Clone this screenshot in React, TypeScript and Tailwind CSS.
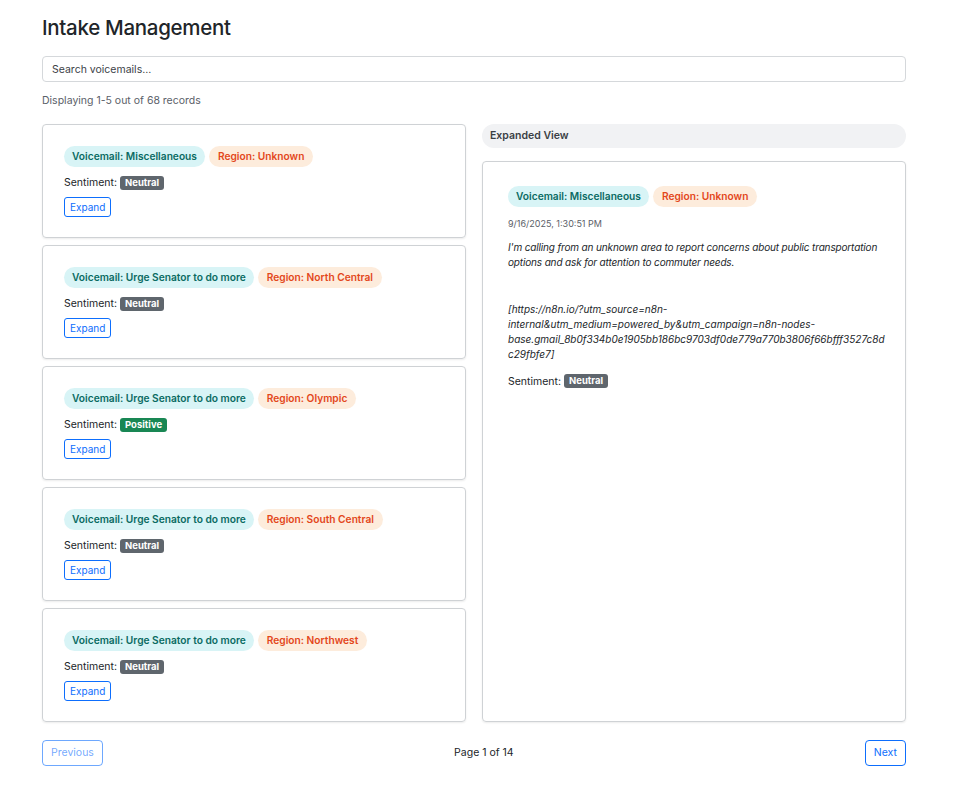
import React from 'react'

type Record = {
    category: string;
    region: string;
    sentiment: 'Neutral' | 'Positive';
}

const records: Record[] = [
    { category: 'Miscellaneous', region: 'Unknown', sentiment: 'Neutral' },
    { category: 'Urge Senator to do more', region: 'North Central', sentiment: 'Neutral' },
    { category: 'Urge Senator to do more', region: 'Olympic', sentiment: 'Positive' },
    { category: 'Urge Senator to do more', region: 'South Central', sentiment: 'Neutral' },
    { category: 'Urge Senator to do more', region: 'Northwest', sentiment: 'Neutral' },
];

const Badges = ({ category, region }: { category: string; region: string }) => (
    <div className="flex items-center gap-[4px]">
        <span className="h-[21px] px-[8px] flex items-center rounded-full bg-[#d8f4f6] text-[#0b6b63] text-[10.2px] font-semibold">
            Voicemail: {category}
        </span>
        <span className="h-[21px] px-[9px] flex items-center rounded-full bg-[#fdecdc] text-[#e3471b] text-[10.2px] font-semibold">
            Region: {region}
        </span>
    </div>
)

const Sentiment = ({ value }: { value: string }) => (
    <div className="flex items-center gap-[3px] text-[10.5px] text-[#212529]">
        <span>Sentiment:</span>
        <span className={`h-[14px] px-[5px] flex items-center rounded-[3px] text-[9.5px] font-bold text-white ${value === 'Positive' ? 'bg-[#198754]' : 'bg-[#5f666d]'}`}>
            {value}
        </span>
    </div>
)

export default function App() {
    return (
        <div className="w-[962px] min-h-[789px] bg-white pl-[42px] pt-[15px] font-['Inter',sans-serif] text-[#212529]">
            <div className="w-[864px]">
                <h1 className="text-[20.5px] font-medium leading-[26px] tracking-[-0.3px]">Intake Management</h1>

                <input
                    type="text"
                    placeholder="Search voicemails..."
                    className="mt-[15px] w-full h-[26px] px-[9px] rounded-[4px] border border-[#d5d8db] text-[10.5px] placeholder:text-[#3c4147] outline-none"
                />

                <p className="mt-[12px] text-[10.5px] text-[#5a6068] leading-[14px]">Displaying 1-5 out of 68 records</p>

                <div className="mt-[16px] grid grid-cols-2 gap-[16px]">
                    <div className="flex flex-col gap-[7px]">
                        {records.map((r, i) => (
                            <div key={i} className="h-[114px] rounded-[4px] border border-[#cfd2d5] shadow-[0_1px_2px_rgba(0,0,0,0.08)] px-[21px] pt-[21px] flex flex-col">
                                <Badges category={r.category} region={r.region} />
                                <div className="mt-[8px]">
                                    <Sentiment value={r.sentiment} />
                                </div>
                                <button className="mt-[6px] self-start h-[20px] px-[5px] rounded-[3px] border border-[#0d6efd] text-[#0d6efd] text-[10px] leading-none">
                                    Expand
                                </button>
                            </div>
                        ))}
                    </div>

                    <div className="flex flex-col">
                        <div className="h-[24px] rounded-full bg-[#f1f2f4] px-[8px] flex items-center text-[10.5px] font-semibold text-[#3a3f45]">
                            Expanded View
                        </div>
                        <div className="mt-[13px] flex-1 rounded-[4px] border border-[#cfd2d5] shadow-[0_1px_2px_rgba(0,0,0,0.08)] pl-[25px] pr-[20px] pt-[24px]">
                            <Badges category="Miscellaneous" region="Unknown" />
                            <div className="mt-[10px] text-[9px] text-[#5a6068]">9/16/2025, 1:30:51 PM</div>
                            <p className="mt-[9px] text-[10px] italic leading-[15px] tracking-[-0.15px] text-[#212529]">
                                I'm calling from an unknown area to report concerns about public transportation options and ask for attention to commuter needs.
                            </p>
                            <p className="mt-[32px] text-[10px] italic leading-[15px] text-[#212529] break-words">
                                [https://n8n.io/?utm_source=n8n-internal&amp;utm_medium=powered_by&amp;utm_campaign=n8n-nodes-base.gmail_8b0f334b0e1905bb186bc9703df0de779a770b3806f66bfff3527c8dc29fbfe7]
                            </p>
                            <div className="mt-[12px]">
                                <Sentiment value="Neutral" />
                            </div>
                        </div>
                    </div>
                </div>

                <div className="mt-[18px] flex items-center justify-between pb-[24px]">
                    <button disabled className="h-[26px] px-[8px] rounded-[4px] border border-[#0d6efd]/60 text-[#0d6efd]/60 text-[10.5px]">
                        Previous
                    </button>
                    <span className="text-[10.5px] text-[#212529]">Page 1 of 14</span>
                    <button className="h-[26px] px-[8px] rounded-[4px] border border-[#0d6efd] text-[#0d6efd] text-[10.5px]">
                        Next
                    </button>
                </div>
            </div>
        </div>
    )
}
